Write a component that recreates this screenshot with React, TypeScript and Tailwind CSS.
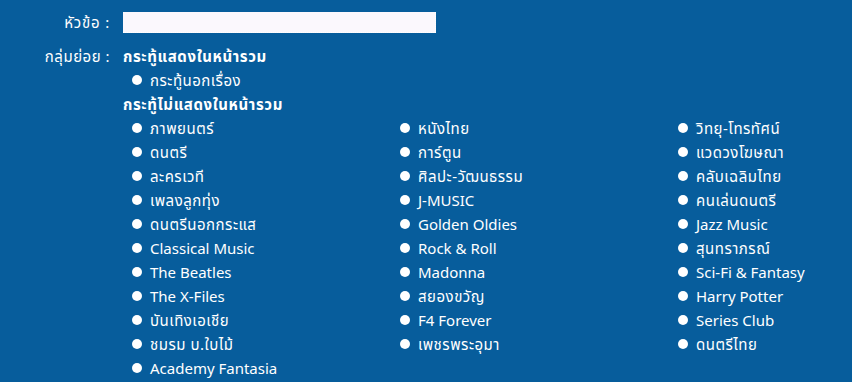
import React from 'react';

const shown = ['กระทู้นอกเรื่อง'];

const hidden = [
  ['ภาพยนตร์', 'หนังไทย', 'วิทยุ-โทรทัศน์'],
  ['ดนตรี', 'การ์ตูน', 'แวดวงโฆษณา'],
  ['ละครเวที', 'ศิลปะ-วัฒนธรรม', 'คลับเฉลิมไทย'],
  ['เพลงลูกทุ่ง', 'J-MUSIC', 'คนเล่นดนตรี'],
  ['ดนตรีนอกกระแส', 'Golden Oldies', 'Jazz Music'],
  ['Classical Music', 'Rock & Roll', 'สุนทราภรณ์'],
  ['The Beatles', 'Madonna', 'Sci-Fi & Fantasy'],
  ['The X-Files', 'สยองขวัญ', 'Harry Potter'],
  ['บันเทิงเอเชีย', 'F4 Forever', 'Series Club'],
  ['ชมรม บ.ใบไม้', 'เพชรพระอุมา', 'ดนตรีไทย'],
  ['Academy Fantasia', '', ''],
];

const isThai = (s: string) => /[\u0E00-\u0E7F]/.test(s);

function Item({ label }: { label: string }) {
  if (!label) return <div />;
  return (
    <div className="flex items-center h-6 gap-[8px]">
      <span className="w-[10px] h-[10px] rounded-full bg-white shrink-0" />
      <span className={isThai(label) ? 'whitespace-nowrap tracking-[0.5px]' : 'whitespace-nowrap'}>{label}</span>
    </div>
  );
}

export default function App() {
  return (
    <div
      className="w-[852px] h-[382px] overflow-hidden bg-[#075d9c] text-white text-[15px] leading-6"
      style={{ fontFamily: 'Tahoma, "Noto Sans", "Noto Sans Thai", "DejaVu Sans", sans-serif' }}
    >
      <div className="grid grid-cols-[110px_1fr] gap-x-[13px] pt-[10px]">
        <div className="text-right h-6 tracking-[0.8px]">หัวข้อ :</div>
        <div className="h-6 flex items-center">
          <div className="w-[313px] h-[21px] bg-[#fbf8fd] border-r border-b border-dotted border-white" />
        </div>

        <div className="text-right mt-[10px] tracking-[0.5px]">กลุ่มย่อย :</div>
        <div className="mt-[10px]">
          <div className="font-bold tracking-[0.6px]">กระทู้แสดงในหน้ารวม</div>
          <div className="pl-[9px]">
            {shown.map((s) => (
              <Item key={s} label={s} />
            ))}
          </div>
          <div className="font-bold tracking-[0.6px]">กระทู้ไม่แสดงในหน้ารวม</div>
          <div className="pl-[9px] grid grid-cols-[268px_278px_1fr]">
            {hidden.flat().map((s, i) => (
              <Item key={i} label={s} />
            ))}
          </div>
        </div>
      </div>
    </div>
  );
}
